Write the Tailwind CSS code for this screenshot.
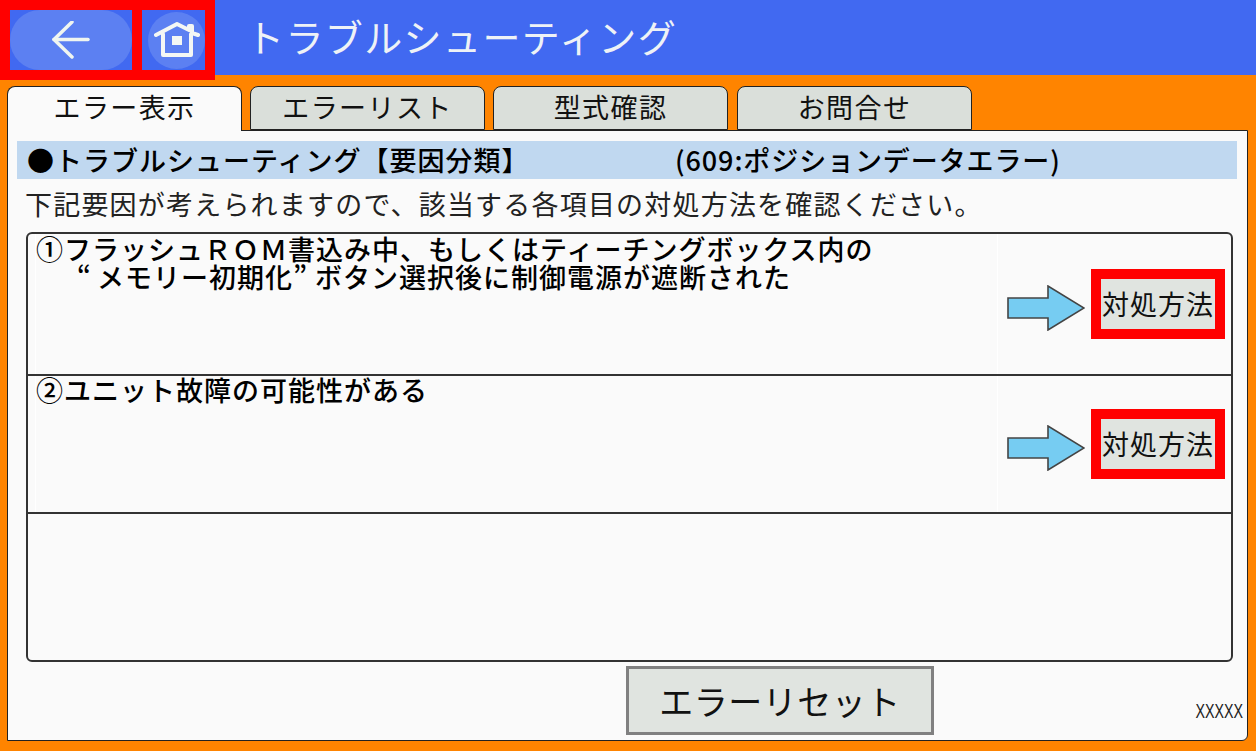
<!DOCTYPE html>
<html lang="ja">
<head>
  <meta charset="UTF-8" />
  <title>トラブルシューティング</title>
  <script src="https://cdn.jsdelivr.net/npm/@tailwindcss/browser@4"></script>
</head>
<body class="w-[1256px] h-[751px] overflow-hidden bg-[#ff8400] font-['Noto_Sans_CJK_JP','Noto_Sans',sans-serif] text-[#111]">

  <!-- Header -->
  <header class="h-[75px] bg-[#4169f1] flex">
    <div class="h-[80px] w-[215px] shrink-0 flex gap-[10px] border-[10px] border-[#ff0000] bg-[#ff0000] relative z-10">
      <button class="w-[122px] h-full bg-[#4169f1] flex items-center justify-center">
        <span class="w-full h-full rounded-[30px] bg-[#5c80f2] flex items-center justify-center">
          <svg width="38" height="38" viewBox="0 0 38 38" fill="none" stroke="#f0f5f0" stroke-width="3.5" stroke-linecap="round" stroke-linejoin="round"><path d="M36 18.5H2"/><path d="M20 1 2 18.5 20 36"/></svg>
        </span>
      </button>
      <button class="w-[63px] h-full bg-[#4169f1] flex items-center justify-end">
        <span class="w-[57px] h-[57px] rounded-full bg-[#5c80f2] flex items-center justify-center">
          <svg width="46" height="36" viewBox="0 0 46 36" fill="none" stroke="#f4f7f4" stroke-width="4" stroke-linejoin="round" stroke-linecap="round"><path d="M2 13 23 2l12 6V4h3v7l6 2"/><path d="M9 12v21h28V12"/><rect x="18" y="14" width="10" height="9" fill="#f4f7f4" stroke="none"/></svg>
        </span>
      </button>
    </div>
    <h1 class="ml-[31px] h-[75px] leading-[71px] text-[38px] tracking-[1.4px] text-[#eef2f6] whitespace-nowrap">トラブルシューティング</h1>
  </header>

  <!-- Tabs -->
  <nav class="mt-[11px] ml-[7px] h-[45px] flex relative z-10">
    <div class="w-[235px] h-[45px] border border-b-0 border-[#222] rounded-t-[8px] bg-[#fafafa] text-center text-[27px] leading-[40px] tracking-[1.4px]">エラー表示</div>
    <div class="ml-[8px] w-[235px] h-[44px] border border-[#222] rounded-t-[8px] bg-[#dadfda] text-center text-[27px] leading-[40px] tracking-[1.4px]">エラーリスト</div>
    <div class="ml-[8px] w-[235px] h-[44px] border border-[#222] rounded-t-[8px] bg-[#dadfda] text-center text-[27px] leading-[40px] tracking-[1.4px]">型式確認</div>
    <div class="ml-[9px] w-[235px] h-[44px] border border-[#222] rounded-t-[8px] bg-[#dadfda] text-center text-[27px] leading-[40px] tracking-[1.4px]">お問合せ</div>
  </nav>

  <!-- Panel -->
  <main class="-mt-px ml-[7px] w-[1241px] h-[611px] border border-[#222] rounded-br-[6px] bg-[#fafafa] pt-[10px] px-[9px] flex flex-col">
    <div class="h-[38px] shrink-0 w-[1220px] bg-[#c0d8f0] flex items-center text-[27px] font-medium text-black whitespace-nowrap">
      <span class="w-[658px] pl-[10px] tracking-[1px]">●トラブルシューティング【要因分類】</span>
      <span class="tracking-[0.9px]">(609:ポジションデータエラー)</span>
    </div>
    <p class="mt-[7px] ml-[8px] text-[27px] leading-[36px] tracking-[1.2px] whitespace-nowrap text-[#222]">下記要因が考えられますので、該当する各項目の対処方法を確認ください。</p>

    <div class="mt-[10px] ml-[9px] w-[1207px] h-[430px] border-2 border-[#333] rounded-[6px] flex flex-col">
      <div class="h-[142px] shrink-0 border-b-2 border-[#333] flex">
        <div class="ml-[7px] w-[963px] h-full pt-px border-x border-white text-[27px] leading-[28px] font-medium tracking-[1px] text-black whitespace-nowrap">
          <p>①フラッシュＲＯＭ書込み中、もしくはティーチングボックス内の</p>
          <p class="pl-[41px]"><span class="tracking-[6px]">“</span>メモリー初期化<span class="tracking-[8px]">”</span>ボタン選択後に制御電源が遮断された</p>
        </div>
        <div class="flex-1 flex items-center pl-[9px] gap-[6px]">
          <svg width="78" height="46" viewBox="0 0 78 46" class="mt-[7px]"><path d="M1 13h40V1l36 22-36 22V33H1z" fill="#76ccf2" stroke="#444" stroke-width="1.6"/></svg>
          <button class="w-[134px] h-[70px] border-[10px] border-[#ff0000] bg-[#e0e4e0] text-[27px] tracking-[1px] text-[#111] whitespace-nowrap">対処方法</button>
        </div>
      </div>
      <div class="h-[138px] shrink-0 border-b-2 border-[#333] flex">
        <div class="ml-[7px] w-[963px] h-full border-x border-white text-[27px] leading-[28px] font-medium tracking-[1px] text-black whitespace-nowrap">
          <p>②ユニット故障の可能性がある</p>
        </div>
        <div class="flex-1 flex items-center pl-[9px] gap-[6px]">
          <svg width="78" height="46" viewBox="0 0 78 46" class="mt-[7px]"><path d="M1 13h40V1l36 22-36 22V33H1z" fill="#76ccf2" stroke="#444" stroke-width="1.6"/></svg>
          <button class="w-[134px] h-[70px] border-[10px] border-[#ff0000] bg-[#e0e4e0] text-[27px] tracking-[1px] text-[#111] whitespace-nowrap">対処方法</button>
        </div>
      </div>
      <div class="flex-1"></div>
    </div>

    <div class="relative flex-1">
      <button class="absolute left-[609px] top-[4px] w-[308px] h-[69px] border-[3px] border-[#808080] bg-[#e0e4e0] text-[34px] leading-[58px] tracking-[0.5px] text-[#111] whitespace-nowrap">エラーリセット</button>
      <span class="absolute right-[-5px] top-[37px] text-[21px] leading-[24px] font-['Liberation_Sans',sans-serif] inline-block origin-right scale-x-[0.68] text-[#222]">XXXXX</span>
    </div>
  </main>
</body>
</html>
